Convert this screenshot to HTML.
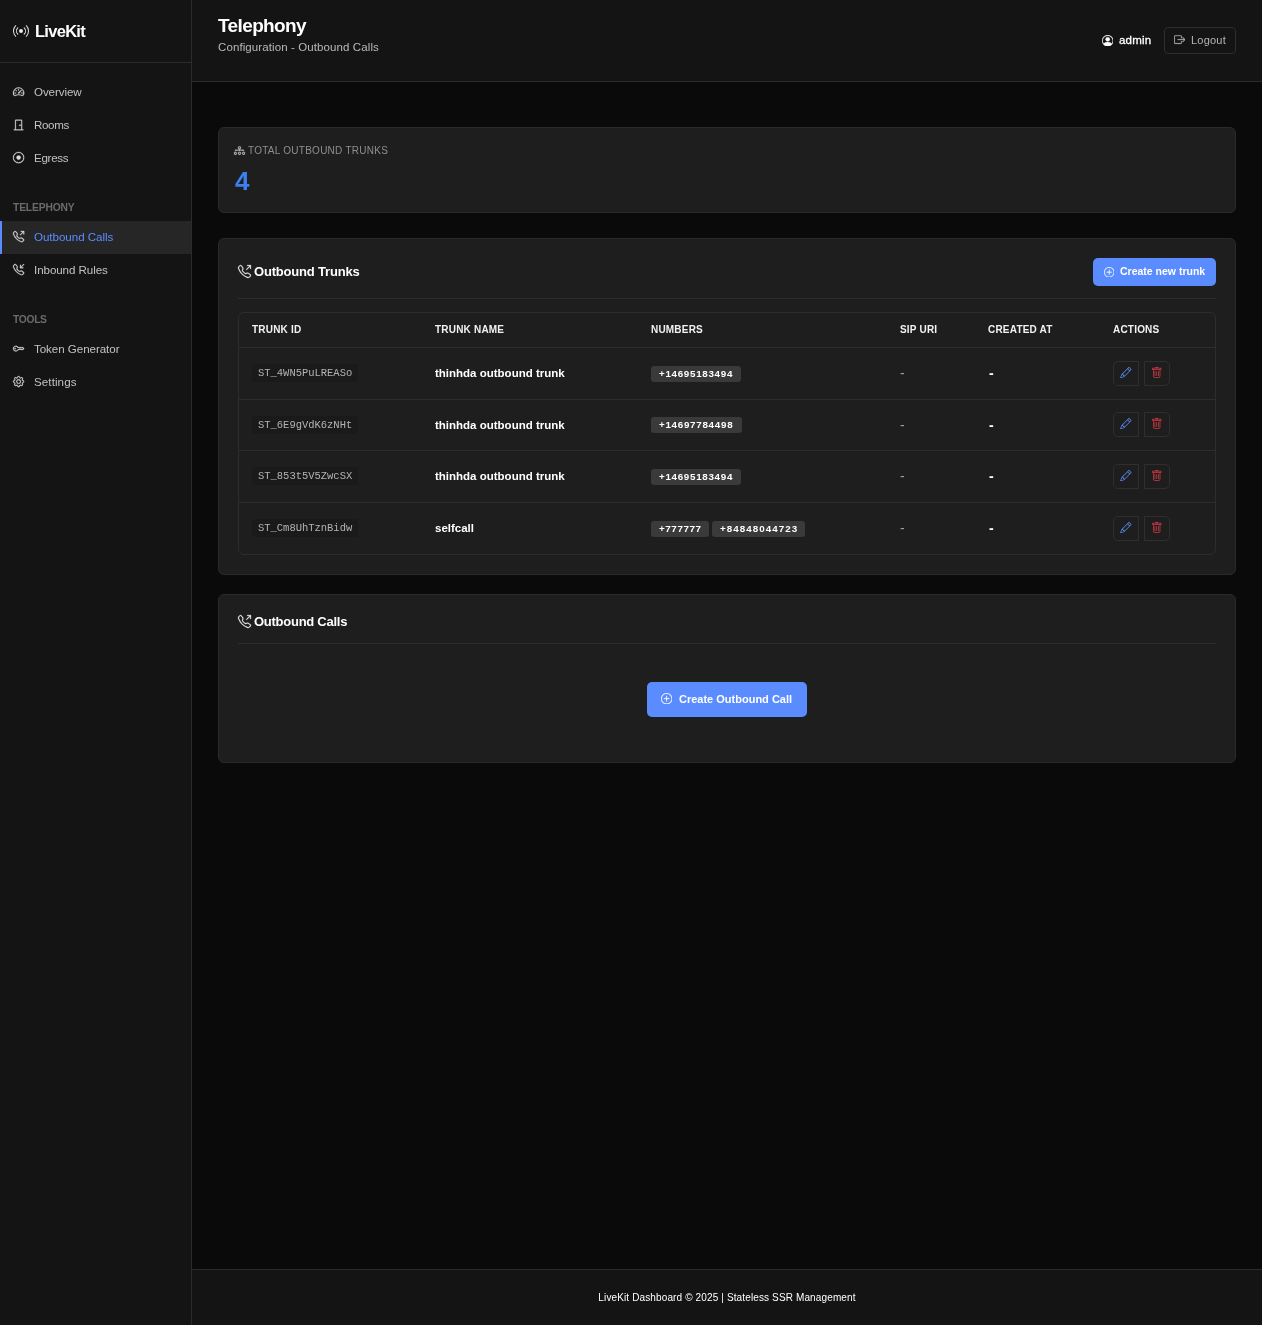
<!DOCTYPE html>
<html lang="en">
<head>
<meta charset="utf-8">
<title>LiveKit Dashboard - Telephony</title>
<style>
*{box-sizing:border-box;margin:0;padding:0}
html,body{width:1262px;height:1325px;overflow:hidden;background:#0a0a0a;color:#fff;
  font-family:"Liberation Sans",sans-serif}
svg{display:block;fill:currentColor}
span,h1,p,.uname,.sec,.stat-l,.stat-v,.ctitle,.th,.id,.nm,.num,.d1,.d2,.footer{will-change:transform}
.sidebar{position:absolute;left:0;top:0;width:192px;height:1325px;background:#141414;border-right:1px solid #2b2b2b}
.brand{height:63px;border-bottom:1px solid #2b2b2b;position:relative}
.brand svg{position:absolute;left:13px;top:23px;width:16px;height:16px;color:#e8e8e8}
.brand span{position:absolute;left:35px;top:19.5px;font-size:16.5px;font-weight:700;line-height:22px;letter-spacing:-0.72px}
.nav{position:absolute;left:0;width:191px;height:33px;color:#c2c2c2;font-size:11.6px;line-height:33px}
.nav svg{position:absolute;left:12.8px;top:10px;width:11.2px;height:11.2px;color:#dcdcdc;stroke:currentColor;stroke-width:.4;overflow:visible}
.nav span{position:absolute;left:34px;top:-1px;white-space:nowrap}
.nav.active{background:#262626;border-left:2px solid #5b8cff;color:#5b8cff}
.nav.active svg{left:10.8px}
.nav.active span{left:32px}
.sec{position:absolute;left:13px;font-size:10.3px;font-weight:700;color:#6b6b6b;line-height:12px}
.header{position:absolute;left:192px;top:0;width:1070px;height:82px;background:#141414;border-bottom:1px solid #2b2b2b}
.header h1{position:absolute;left:26px;top:13.8px;font-size:19px;line-height:24px;font-weight:700;letter-spacing:-0.62px}
.header p{position:absolute;left:26px;top:40px;font-size:11.5px;line-height:14px;color:#b9b9b9;letter-spacing:0.1px}
.user{position:absolute;left:910px;top:34.6px;width:11.4px;height:11.4px;stroke:currentColor;stroke-width:.3}
.uname{position:absolute;left:927.4px;top:32.3px;font-size:11.5px;line-height:16px;color:#fff;letter-spacing:0.2px;-webkit-text-stroke:0.3px #fff}
.logout{position:absolute;left:972px;top:27px;width:72px;height:27px;border:1px solid #2e2e2e;border-radius:4px;color:#b5b5b5;font-size:11px;line-height:25.6px}
.logout svg{position:absolute;left:9px;top:6.3px;width:11.3px;height:11.3px;stroke:currentColor;stroke-width:.35}
.logout span{position:absolute;left:26.4px;top:0;letter-spacing:0.22px}
.card{position:absolute;left:218px;width:1018px;background:#1e1e1e;border:1px solid #2a2a2a;border-radius:6px}
.stat-l{position:absolute;left:29.2px;top:17px;font-size:10px;line-height:12px;color:#8f8f8f;letter-spacing:0.26px;white-space:nowrap}
.stat-i{position:absolute;left:14.8px;top:16.6px;width:11px;height:11px;color:#c4c4c4;stroke:currentColor;stroke-width:.4;overflow:visible}
.stat-v{position:absolute;left:16px;top:37px;font-size:26px;line-height:32px;font-weight:700;color:#3b7ff0}
.ctitle{position:absolute;left:35px;font-size:13px;font-weight:700;line-height:18px;white-space:nowrap}
.cicon{position:absolute;left:19px;width:13px;height:13px;color:#ececec;stroke:currentColor;stroke-width:.3;overflow:visible}
.sep{position:absolute;left:19px;width:978px;height:1px;background:#2c2c2c}
.btn{position:absolute;background:#5b8cff;border-radius:5px;color:#fff;font-weight:700;white-space:nowrap}
.btn svg{position:absolute}
.btn span{position:absolute}
.table{position:absolute;left:19px;top:73px;width:978px;height:243px;border:1px solid #2d2d2d;border-radius:6px}
.th{position:absolute;top:0;height:34px;line-height:33px;font-size:10px;font-weight:700;letter-spacing:0.2px;color:#f2f2f2;white-space:nowrap}
.hl{position:absolute;left:0;width:976px;height:1px;background:#2d2d2d}
.row{position:absolute;left:0;width:976px;height:51px}
.id{position:absolute;left:13px;top:16px;height:18px;width:106px;padding:0 6px;background:#1a1a1a;border-radius:3px;font-family:"Liberation Mono",monospace;font-size:10.5px;line-height:18px;color:#b4b4b4;white-space:nowrap;letter-spacing:-0.02px}
.nm{position:absolute;left:196.4px;top:17.4px;font-size:11.5px;line-height:16px;font-weight:700;white-space:nowrap}
.num{position:absolute;top:18px;height:16px;background:#3a3a3a;border-radius:3px;font-size:9.8px;font-weight:700;line-height:16px;color:#fff;white-space:nowrap;text-align:left;padding-left:8px}
.d1{position:absolute;left:660.7px;top:17px;font-size:14px;line-height:16px;color:#9c9c9c}
.d2{position:absolute;left:749.5px;top:17px;font-size:14px;line-height:16px;color:#fff;font-weight:700}
.ab{position:absolute;top:13px;width:26px;height:25px;border:1px solid #2f2f2f}
.ab svg{position:absolute;left:6.2px;top:4.5px;width:11.5px;height:11.5px}
.ab.e{left:874px;border-radius:5px 0 0 5px;color:#5b8cf5}
.ab.t{left:905px;border-radius:0 5px 5px 0;color:#d93a46}
.footer{position:absolute;left:192px;top:1269px;width:1070px;height:56px;background:#141414;border-top:1px solid #2b2b2b;text-align:center;font-size:10px;line-height:55px;color:#fff;letter-spacing:0.13px}
</style>
</head>
<body>
<div class="sidebar">
  <div class="brand">
    <svg viewBox="0 0 16 16"><path d="M3.05 3.05a7 7 0 0 0 0 9.9.5.5 0 0 1-.707.707 8 8 0 0 1 0-11.314.5.5 0 0 1 .707.707m2.122 2.122a4 4 0 0 0 0 5.656.5.5 0 1 1-.708.708 5 5 0 0 1 0-7.072.5.5 0 0 1 .708.708m5.656-.708a.5.5 0 0 1 .708 0 5 5 0 0 1 0 7.072.5.5 0 1 1-.708-.708 4 4 0 0 0 0-5.656.5.5 0 0 1 0-.708m2.122-2.12a.5.5 0 0 1 .707 0 8 8 0 0 1 0 11.313.5.5 0 0 1-.707-.707 7 7 0 0 0 0-9.9.5.5 0 0 1 0-.707zM10 8a2 2 0 1 1-4 0 2 2 0 0 1 4 0"/></svg>
    <span>LiveKit</span>
  </div>
  <div class="nav" style="top:76px"><svg viewBox="0 0 16 16"><path d="M8 4a.5.5 0 0 1 .5.5V6a.5.5 0 0 1-1 0V4.500A.5.5 0 0 1 8 4M3.732 5.732a.5.5 0 0 1 .707 0l.915.914a.5.5 0 1 1-.708.708l-.914-.915a.5.5 0 0 1 0-.707M2 10a.5.5 0 0 1 .5-.5h1.586a.5.5 0 0 1 0 1H2.500A.5.5 0 0 1 2 10m9.500 0a.5.5 0 0 1 .5-.5h1.500a.5.5 0 0 1 0 1H12a.5.5 0 0 1-.5-.5m.754-4.246a.39.39 0 0 0-.527-.02L7.547 9.310a.91.91 0 1 0 1.302 1.258l3.434-4.297a.39.39 0 0 0-.029-.518z"/><path fill-rule="evenodd" d="M0 10a8 8 0 1 1 15.547 2.661c-.442 1.253-1.845 1.602-2.932 1.250C11.309 13.488 9.475 13 8 13c-1.474 0-3.310.488-4.615.911-1.087.352-2.490.003-2.932-1.250A8 8 0 0 1 0 10m8-7a7 7 0 0 0-6.603 9.329c.203.575.923.876 1.680.630C4.397 12.533 6.358 12 8 12s3.604.532 4.923.960c.757.245 1.477-.056 1.680-.631A7 7 0 0 0 8 3"/></svg><span style="letter-spacing:-0.1px">Overview</span></div>
  <div class="nav" style="top:109px"><svg viewBox="0 0 16 16"><path d="M3 2a1 1 0 0 1 1-1h8a1 1 0 0 1 1 1v13h1.500a.5.5 0 0 1 0 1h-13a.5.5 0 0 1 0-1H3zm1 13h8V2H4z"/><path d="M9 9a1 1 0 1 0 2 0 1 1 0 0 0-2 0"/></svg><span style="letter-spacing:-0.35px">Rooms</span></div>
  <div class="nav" style="top:142px"><svg viewBox="0 0 16 16"><path d="M8 15A7 7 0 1 1 8 1a7 7 0 0 1 0 14m0 1A8 8 0 1 0 8 0a8 8 0 0 0 0 16"/><path d="M11 8a3 3 0 1 1-6 0 3 3 0 0 1 6 0"/></svg><span style="letter-spacing:-0.3px">Egress</span></div>
  <div class="sec" style="top:201.5px;letter-spacing:-0.16px">TELEPHONY</div>
  <div class="nav active" style="top:221px"><svg viewBox="0 0 16 16"><path d="M3.654 1.328a.678.678 0 0 0-1.015-.063L1.605 2.300c-.483.484-.661 1.169-.450 1.770a17.600 17.600 0 0 0 4.168 6.608 17.600 17.600 0 0 0 6.608 4.168c.601.211 1.286.033 1.770-.450l1.034-1.034a.678.678 0 0 0-.063-1.015l-2.307-1.794a.68.68 0 0 0-.580-.122l-2.190.547a1.750 1.750 0 0 1-1.657-.459L5.482 8.062a1.750 1.750 0 0 1-.460-1.657l.548-2.190a.68.68 0 0 0-.122-.580zM1.884.511a1.745 1.745 0 0 1 2.612.163L6.290 2.980c.329.423.445.974.315 1.494l-.547 2.190a.68.68 0 0 0 .178.643l2.457 2.457a.68.68 0 0 0 .644.178l2.189-.547a1.750 1.750 0 0 1 1.494.315l2.306 1.794c.829.645.905 1.870.163 2.611l-1.034 1.034c-.740.740-1.846 1.065-2.877.702a18.600 18.600 0 0 1-7.010-4.420 18.600 18.600 0 0 1-4.420-7.009c-.362-1.030-.037-2.137.703-2.877zM11 .5a.5.5 0 0 1 .5-.5h4a.5.5 0 0 1 .5.5v4a.5.5 0 0 1-1 0V1.707l-4.146 4.147a.5.5 0 0 1-.708-.708L14.293 1H11.500a.5.5 0 0 1-.5-.5"/></svg><span style="letter-spacing:-0.05px">Outbound Calls</span></div>
  <div class="nav" style="top:254px"><svg viewBox="0 0 16 16"><path d="M15.854.146a.5.5 0 0 1 0 .708L11.707 5H14.500a.5.5 0 0 1 0 1h-4a.5.5 0 0 1-.5-.5v-4a.5.5 0 0 1 1 0v2.793L15.146.146a.5.5 0 0 1 .708 0m-12.200 1.182a.678.678 0 0 0-1.015-.063L1.605 2.300c-.483.484-.661 1.169-.450 1.770a17.600 17.600 0 0 0 4.168 6.608 17.600 17.600 0 0 0 6.608 4.168c.601.211 1.286.033 1.770-.450l1.034-1.034a.678.678 0 0 0-.063-1.015l-2.307-1.794a.68.68 0 0 0-.580-.122l-2.190.547a1.750 1.750 0 0 1-1.657-.459L5.482 8.062a1.750 1.750 0 0 1-.460-1.657l.548-2.190a.68.68 0 0 0-.122-.580zM1.884.511a1.745 1.745 0 0 1 2.612.163L6.290 2.980c.329.423.445.974.315 1.494l-.547 2.190a.68.68 0 0 0 .178.643l2.457 2.457a.68.68 0 0 0 .644.178l2.189-.547a1.750 1.750 0 0 1 1.494.315l2.306 1.794c.829.645.905 1.870.163 2.611l-1.034 1.034c-.740.740-1.846 1.065-2.877.702a18.600 18.600 0 0 1-7.010-4.420 18.600 18.600 0 0 1-4.420-7.009c-.362-1.030-.037-2.137.703-2.877z"/></svg><span style="letter-spacing:-0.08px">Inbound Rules</span></div>
  <div class="sec" style="top:313.5px;letter-spacing:-0.33px">TOOLS</div>
  <div class="nav" style="top:333px"><svg viewBox="0 0 16 16"><path d="M0 8a4 4 0 0 1 7.465-2H14a.5.5 0 0 1 .354.146l1.500 1.500a.5.5 0 0 1 0 .708l-1.500 1.500a.5.5 0 0 1-.708 0L13 9.207l-.646.647a.5.5 0 0 1-.708 0L11 9.207l-.646.647a.5.5 0 0 1-.708 0L9 9.207l-.646.647A.5.5 0 0 1 8 10h-.535A4 4 0 0 1 0 8m4-3a3 3 0 1 0 2.712 4.285A.5.5 0 0 1 7.163 9h.630l.853-.854a.5.5 0 0 1 .708 0l.646.647.646-.647a.5.5 0 0 1 .708 0l.646.647.646-.647a.5.5 0 0 1 .708 0l.646.647.793-.793-1-1h-6.630a.5.5 0 0 1-.451-.285A3 3 0 0 0 4 5"/><path d="M4 8a1 1 0 1 1-2 0 1 1 0 0 1 2 0"/></svg><span style="letter-spacing:-0.06px">Token Generator</span></div>
  <div class="nav" style="top:366px"><svg viewBox="0 0 16 16"><path d="M8 4.754a3.246 3.246 0 1 0 0 6.492 3.246 3.246 0 0 0 0-6.492M5.754 8a2.246 2.246 0 1 1 4.492 0 2.246 2.246 0 0 1-4.492 0"/><path d="M9.796 1.343c-.527-1.790-3.065-1.790-3.592 0l-.094.319a.873.873 0 0 1-1.255.520l-.292-.160c-1.640-.892-3.433.902-2.540 2.541l.159.292a.873.873 0 0 1-.520 1.255l-.319.094c-1.790.527-1.790 3.065 0 3.592l.319.094a.873.873 0 0 1 .520 1.255l-.160.292c-.892 1.640.901 3.434 2.541 2.540l.292-.159a.873.873 0 0 1 1.255.520l.094.319c.527 1.790 3.065 1.790 3.592 0l.094-.319a.873.873 0 0 1 1.255-.520l.292.160c1.640.893 3.434-.902 2.540-2.541l-.159-.292a.873.873 0 0 1 .520-1.255l.319-.094c1.790-.527 1.790-3.065 0-3.592l-.319-.094a.873.873 0 0 1-.520-1.255l.160-.292c.893-1.640-.902-3.433-2.541-2.540l-.292.159a.873.873 0 0 1-1.255-.520zm-2.633.283c.246-.835 1.428-.835 1.674 0l.094.319a1.873 1.873 0 0 0 2.693 1.115l.291-.160c.764-.415 1.600.420 1.184 1.185l-.159.292a1.873 1.873 0 0 0 1.116 2.692l.318.094c.835.246.835 1.428 0 1.674l-.319.094a1.873 1.873 0 0 0-1.115 2.693l.160.291c.415.764-.420 1.600-1.185 1.184l-.291-.159a1.873 1.873 0 0 0-2.693 1.116l-.094.318c-.246.835-1.428.835-1.674 0l-.094-.319a1.873 1.873 0 0 0-2.692-1.115l-.292.160c-.764.415-1.600-.420-1.184-1.185l.159-.291A1.873 1.873 0 0 0 1.945 8.930l-.319-.094c-.835-.246-.835-1.428 0-1.674l.319-.094A1.873 1.873 0 0 0 3.060 4.377l-.160-.292c-.415-.764.420-1.600 1.185-1.184l.292.159a1.873 1.873 0 0 0 2.692-1.115z"/></svg><span style="letter-spacing:0.08px">Settings</span></div>
</div>

<div class="header">
  <h1>Telephony</h1>
  <p>Configuration - Outbound Calls</p>
  <svg class="user" viewBox="0 0 16 16"><path d="M11 6a3 3 0 1 1-6 0 3 3 0 0 1 6 0"/><path fill-rule="evenodd" d="M0 8a8 8 0 1 1 16 0A8 8 0 0 1 0 8m8-7a7 7 0 0 0-5.468 11.370C3.242 11.226 4.805 10 8 10s4.757 1.225 5.468 2.370A7 7 0 0 0 8 1"/></svg>
  <div class="uname">admin</div>
  <div class="logout"><svg viewBox="0 0 16 16"><path fill-rule="evenodd" d="M10 12.500a.5.5 0 0 1-.5.5h-8a.5.5 0 0 1-.5-.5v-9a.5.5 0 0 1 .5-.5h8a.5.5 0 0 1 .5.5v2a.5.5 0 0 0 1 0v-2A1.500 1.500 0 0 0 9.500 2h-8A1.500 1.500 0 0 0 0 3.500v9A1.500 1.500 0 0 0 1.500 14h8a1.500 1.500 0 0 0 1.500-1.500v-2a.5.5 0 0 0-1 0z"/><path fill-rule="evenodd" d="M15.854 8.354a.5.5 0 0 0 0-.708l-3-3a.5.5 0 0 0-.708.708L14.293 7.500H5.500a.5.5 0 0 0 0 1h8.793l-2.147 2.146a.5.5 0 0 0 .708.708z"/></svg><span>Logout</span></div>
</div>

<!-- Stat card -->
<div class="card" style="top:127px;height:86px">
  <svg class="stat-i" viewBox="0 0 16 16"><path fill-rule="evenodd" d="M6 3.500A1.500 1.500 0 0 1 7.500 2h1A1.500 1.500 0 0 1 10 3.500v1A1.500 1.500 0 0 1 8.500 6v1H14a.5.5 0 0 1 .5.5v1a.5.5 0 0 1-1 0V8h-5v.5a.5.5 0 0 1-1 0V8h-5v.5a.5.5 0 0 1-1 0v-1A.5.5 0 0 1 2 7h5.500V6A1.500 1.500 0 0 1 6 4.500zM8.500 5a.5.5 0 0 0 .5-.5v-1a.5.5 0 0 0-.5-.5h-1a.5.5 0 0 0-.5.5v1a.5.5 0 0 0 .5.5zM0 11.500A1.500 1.500 0 0 1 1.500 10h1A1.500 1.500 0 0 1 4 11.500v1A1.500 1.500 0 0 1 2.500 14h-1A1.500 1.500 0 0 1 0 12.500zm1.500-.5a.5.5 0 0 0-.5.5v1a.5.5 0 0 0 .5.5h1a.5.5 0 0 0 .5-.5v-1a.5.5 0 0 0-.5-.5zm4.500.5A1.500 1.500 0 0 1 7.500 10h1a1.500 1.500 0 0 1 1.500 1.500v1A1.500 1.500 0 0 1 8.500 14h-1A1.500 1.500 0 0 1 6 12.500zm1.500-.5a.5.5 0 0 0-.5.5v1a.5.5 0 0 0 .5.5h1a.5.5 0 0 0 .5-.5v-1a.5.5 0 0 0-.5-.5zm4.500.5a1.500 1.500 0 0 1 1.500-1.500h1a1.500 1.500 0 0 1 1.500 1.500v1a1.500 1.500 0 0 1-1.500 1.500h-1a1.500 1.500 0 0 1-1.500-1.500zm1.500-.5a.5.5 0 0 0-.5.5v1a.5.5 0 0 0 .5.5h1a.5.5 0 0 0 .5-.5v-1a.5.5 0 0 0-.5-.5z"/></svg>
  <div class="stat-l">TOTAL OUTBOUND TRUNKS</div>
  <div class="stat-v">4</div>
</div>

<!-- Trunks card -->
<div class="card" style="top:238px;height:337px">
  <svg class="cicon" style="top:26px" viewBox="0 0 16 16"><path d="M3.654 1.328a.678.678 0 0 0-1.015-.063L1.605 2.300c-.483.484-.661 1.169-.450 1.770a17.600 17.600 0 0 0 4.168 6.608 17.600 17.600 0 0 0 6.608 4.168c.601.211 1.286.033 1.770-.450l1.034-1.034a.678.678 0 0 0-.063-1.015l-2.307-1.794a.68.68 0 0 0-.580-.122l-2.190.547a1.750 1.750 0 0 1-1.657-.459L5.482 8.062a1.750 1.750 0 0 1-.460-1.657l.548-2.190a.68.68 0 0 0-.122-.580zM1.884.511a1.745 1.745 0 0 1 2.612.163L6.290 2.980c.329.423.445.974.315 1.494l-.547 2.190a.68.68 0 0 0 .178.643l2.457 2.457a.68.68 0 0 0 .644.178l2.189-.547a1.750 1.750 0 0 1 1.494.315l2.306 1.794c.829.645.905 1.870.163 2.611l-1.034 1.034c-.740.740-1.846 1.065-2.877.702a18.600 18.600 0 0 1-7.010-4.420 18.600 18.600 0 0 1-4.420-7.009c-.362-1.030-.037-2.137.703-2.877zM11 .5a.5.5 0 0 1 .5-.5h4a.5.5 0 0 1 .5.5v4a.5.5 0 0 1-1 0V1.707l-4.146 4.147a.5.5 0 0 1-.708-.708L14.293 1H11.500a.5.5 0 0 1-.5-.5"/></svg>
  <div class="ctitle" style="top:24px;letter-spacing:-0.19px">Outbound Trunks</div>
  <div class="btn" style="left:874px;top:19px;width:123px;height:28px;font-size:10.5px;line-height:26px;border-radius:5px"><svg style="left:11px;top:8.8px;width:10.4px;height:10.4px;stroke:currentColor;stroke-width:.3" viewBox="0 0 16 16"><path d="M8 15A7 7 0 1 1 8 1a7 7 0 0 1 0 14m0 1A8 8 0 1 0 8 0a8 8 0 0 0 0 16"/><path d="M8 4a.5.5 0 0 1 .5.5v3h3a.5.5 0 0 1 0 1h-3v3a.5.5 0 0 1-1 0v-3h-3a.5.5 0 0 1 0-1h3v-3A.5.5 0 0 1 8 4"/></svg><span style="left:27px;top:0">Create new trunk</span></div>
  <div class="sep" style="top:59px"></div>
  <div class="table">
    <div class="th" style="left:13px">TRUNK ID</div>
    <div class="th" style="left:196px">TRUNK NAME</div>
    <div class="th" style="left:412px">NUMBERS</div>
    <div class="th" style="left:661px">SIP URI</div>
    <div class="th" style="left:749px">CREATED AT</div>
    <div class="th" style="left:874px">ACTIONS</div>
    <div class="hl" style="top:34px"></div>
    <div class="row" style="top:35px">
      <div class="id">ST_4WN5PuLREASo</div><div class="nm">thinhda outbound trunk</div>
      <div class="num" style="left:412px;width:90px;letter-spacing:0.7px">+14695183494</div>
      <div class="d1">-</div><div class="d2">-</div>
      <div class="ab e"><svg viewBox="0 0 16 16"><path d="M12.146.146a.5.5 0 0 1 .708 0l3 3a.5.5 0 0 1 0 .708l-10 10a.5.5 0 0 1-.168.110l-5 2a.5.5 0 0 1-.650-.650l2-5a.5.5 0 0 1 .110-.168zM11.207 2.500 13.500 4.793 14.793 3.500 12.500 1.207zm1.586 3L10.500 3.207 4 9.707V10h.5a.5.5 0 0 1 .5.5v.5h.5a.5.5 0 0 1 .5.5v.5h.293zm-9.761 5.175-.106.106-1.528 3.821 3.821-1.528.106-.106A.5.5 0 0 1 5 12.500V12h-.5a.5.5 0 0 1-.5-.5V11h-.5a.5.5 0 0 1-.468-.325"/></svg></div><div class="ab t"><svg viewBox="0 0 16 16"><path d="M5.500 5.500A.5.5 0 0 1 6 6v6a.5.5 0 0 1-1 0V6a.5.5 0 0 1 .5-.5m2.500 0a.5.5 0 0 1 .5.5v6a.5.5 0 0 1-1 0V6a.5.5 0 0 1 .5-.5m3 .5a.5.5 0 0 0-1 0v6a.5.5 0 0 0 1 0z"/><path d="M14.500 3a1 1 0 0 1-1 1H13v9a2 2 0 0 1-2 2H5a2 2 0 0 1-2-2V4h-.5a1 1 0 0 1-1-1V2a1 1 0 0 1 1-1H6a1 1 0 0 1 1-1h2a1 1 0 0 1 1 1h3.500a1 1 0 0 1 1 1zM4.118 4 4 4.059V13a1 1 0 0 0 1 1h6a1 1 0 0 0 1-1V4.059L11.882 4zM2.500 3h11V2h-11z"/></svg></div>
    </div>
    <div class="hl" style="top:86px"></div>
    <div class="row" style="top:87px;height:50px">
      <div class="id">ST_6E9gVdK6zNHt</div><div class="nm">thinhda outbound trunk</div>
      <div class="num" style="left:412px;width:91px;top:17px;letter-spacing:0.72px">+14697784498</div>
      <div class="d1">-</div><div class="d2">-</div>
      <div class="ab e" style="top:12px"><svg viewBox="0 0 16 16"><path d="M12.146.146a.5.5 0 0 1 .708 0l3 3a.5.5 0 0 1 0 .708l-10 10a.5.5 0 0 1-.168.110l-5 2a.5.5 0 0 1-.650-.650l2-5a.5.5 0 0 1 .110-.168zM11.207 2.500 13.500 4.793 14.793 3.500 12.500 1.207zm1.586 3L10.500 3.207 4 9.707V10h.5a.5.5 0 0 1 .5.5v.5h.5a.5.5 0 0 1 .5.5v.5h.293zm-9.761 5.175-.106.106-1.528 3.821 3.821-1.528.106-.106A.5.5 0 0 1 5 12.500V12h-.5a.5.5 0 0 1-.5-.5V11h-.5a.5.5 0 0 1-.468-.325"/></svg></div><div class="ab t" style="top:12px"><svg viewBox="0 0 16 16"><path d="M5.500 5.500A.5.5 0 0 1 6 6v6a.5.5 0 0 1-1 0V6a.5.5 0 0 1 .5-.5m2.500 0a.5.5 0 0 1 .5.5v6a.5.5 0 0 1-1 0V6a.5.5 0 0 1 .5-.5m3 .5a.5.5 0 0 0-1 0v6a.5.5 0 0 0 1 0z"/><path d="M14.500 3a1 1 0 0 1-1 1H13v9a2 2 0 0 1-2 2H5a2 2 0 0 1-2-2V4h-.5a1 1 0 0 1-1-1V2a1 1 0 0 1 1-1H6a1 1 0 0 1 1-1h2a1 1 0 0 1 1 1h3.500a1 1 0 0 1 1 1zM4.118 4 4 4.059V13a1 1 0 0 0 1 1h6a1 1 0 0 0 1-1V4.059L11.882 4zM2.500 3h11V2h-11z"/></svg></div>
    </div>
    <div class="hl" style="top:137px"></div>
    <div class="row" style="top:138px">
      <div class="id">ST_853t5V5ZwcSX</div><div class="nm">thinhda outbound trunk</div>
      <div class="num" style="left:412px;width:90px;letter-spacing:0.7px">+14695183494</div>
      <div class="d1">-</div><div class="d2">-</div>
      <div class="ab e"><svg viewBox="0 0 16 16"><path d="M12.146.146a.5.5 0 0 1 .708 0l3 3a.5.5 0 0 1 0 .708l-10 10a.5.5 0 0 1-.168.110l-5 2a.5.5 0 0 1-.650-.650l2-5a.5.5 0 0 1 .110-.168zM11.207 2.500 13.500 4.793 14.793 3.500 12.500 1.207zm1.586 3L10.500 3.207 4 9.707V10h.5a.5.5 0 0 1 .5.5v.5h.5a.5.5 0 0 1 .5.5v.5h.293zm-9.761 5.175-.106.106-1.528 3.821 3.821-1.528.106-.106A.5.5 0 0 1 5 12.500V12h-.5a.5.5 0 0 1-.5-.5V11h-.5a.5.5 0 0 1-.468-.325"/></svg></div><div class="ab t"><svg viewBox="0 0 16 16"><path d="M5.500 5.500A.5.5 0 0 1 6 6v6a.5.5 0 0 1-1 0V6a.5.5 0 0 1 .5-.5m2.500 0a.5.5 0 0 1 .5.5v6a.5.5 0 0 1-1 0V6a.5.5 0 0 1 .5-.5m3 .5a.5.5 0 0 0-1 0v6a.5.5 0 0 0 1 0z"/><path d="M14.500 3a1 1 0 0 1-1 1H13v9a2 2 0 0 1-2 2H5a2 2 0 0 1-2-2V4h-.5a1 1 0 0 1-1-1V2a1 1 0 0 1 1-1H6a1 1 0 0 1 1-1h2a1 1 0 0 1 1 1h3.500a1 1 0 0 1 1 1zM4.118 4 4 4.059V13a1 1 0 0 0 1 1h6a1 1 0 0 0 1-1V4.059L11.882 4zM2.500 3h11V2h-11z"/></svg></div>
    </div>
    <div class="hl" style="top:189px"></div>
    <div class="row" style="top:190px">
      <div class="id">ST_Cm8UhTznBidw</div><div class="nm">selfcall</div>
      <div class="num" style="left:412px;width:58px;letter-spacing:0.6px">+777777</div><div class="num" style="left:473.4px;width:92.8px;letter-spacing:1.05px">+84848044723</div>
      <div class="d1">-</div><div class="d2">-</div>
      <div class="ab e"><svg viewBox="0 0 16 16"><path d="M12.146.146a.5.5 0 0 1 .708 0l3 3a.5.5 0 0 1 0 .708l-10 10a.5.5 0 0 1-.168.110l-5 2a.5.5 0 0 1-.650-.650l2-5a.5.5 0 0 1 .110-.168zM11.207 2.500 13.500 4.793 14.793 3.500 12.500 1.207zm1.586 3L10.500 3.207 4 9.707V10h.5a.5.5 0 0 1 .5.5v.5h.5a.5.5 0 0 1 .5.5v.5h.293zm-9.761 5.175-.106.106-1.528 3.821 3.821-1.528.106-.106A.5.5 0 0 1 5 12.500V12h-.5a.5.5 0 0 1-.5-.5V11h-.5a.5.5 0 0 1-.468-.325"/></svg></div><div class="ab t"><svg viewBox="0 0 16 16"><path d="M5.500 5.500A.5.5 0 0 1 6 6v6a.5.5 0 0 1-1 0V6a.5.5 0 0 1 .5-.5m2.500 0a.5.5 0 0 1 .5.5v6a.5.5 0 0 1-1 0V6a.5.5 0 0 1 .5-.5m3 .5a.5.5 0 0 0-1 0v6a.5.5 0 0 0 1 0z"/><path d="M14.500 3a1 1 0 0 1-1 1H13v9a2 2 0 0 1-2 2H5a2 2 0 0 1-2-2V4h-.5a1 1 0 0 1-1-1V2a1 1 0 0 1 1-1H6a1 1 0 0 1 1-1h2a1 1 0 0 1 1 1h3.500a1 1 0 0 1 1 1zM4.118 4 4 4.059V13a1 1 0 0 0 1 1h6a1 1 0 0 0 1-1V4.059L11.882 4zM2.500 3h11V2h-11z"/></svg></div>
    </div>
  </div>
</div>

<!-- Calls card -->
<div class="card" style="top:594px;height:169px">
  <svg class="cicon" style="top:20.2px" viewBox="0 0 16 16"><path d="M3.654 1.328a.678.678 0 0 0-1.015-.063L1.605 2.300c-.483.484-.661 1.169-.450 1.770a17.600 17.600 0 0 0 4.168 6.608 17.600 17.600 0 0 0 6.608 4.168c.601.211 1.286.033 1.770-.450l1.034-1.034a.678.678 0 0 0-.063-1.015l-2.307-1.794a.68.68 0 0 0-.580-.122l-2.190.547a1.750 1.750 0 0 1-1.657-.459L5.482 8.062a1.750 1.750 0 0 1-.460-1.657l.548-2.190a.68.68 0 0 0-.122-.580zM1.884.511a1.745 1.745 0 0 1 2.612.163L6.290 2.980c.329.423.445.974.315 1.494l-.547 2.190a.68.68 0 0 0 .178.643l2.457 2.457a.68.68 0 0 0 .644.178l2.189-.547a1.750 1.750 0 0 1 1.494.315l2.306 1.794c.829.645.905 1.870.163 2.611l-1.034 1.034c-.740.740-1.846 1.065-2.877.702a18.600 18.600 0 0 1-7.010-4.420 18.600 18.600 0 0 1-4.420-7.009c-.362-1.030-.037-2.137.703-2.877zM11 .5a.5.5 0 0 1 .5-.5h4a.5.5 0 0 1 .5.5v4a.5.5 0 0 1-1 0V1.707l-4.146 4.147a.5.5 0 0 1-.708-.708L14.293 1H11.500a.5.5 0 0 1-.5-.5"/></svg>
  <div class="ctitle" style="top:18px;letter-spacing:-0.26px">Outbound Calls</div>
  <div class="sep" style="top:48px"></div>
  <div class="btn" style="left:428px;top:87px;width:160px;height:35px;font-size:11px;line-height:34px;border-radius:5px"><svg style="left:14px;top:10.7px;width:11.3px;height:11.3px;stroke:currentColor;stroke-width:.3" viewBox="0 0 16 16"><path d="M8 15A7 7 0 1 1 8 1a7 7 0 0 1 0 14m0 1A8 8 0 1 0 8 0a8 8 0 0 0 0 16"/><path d="M8 4a.5.5 0 0 1 .5.5v3h3a.5.5 0 0 1 0 1h-3v3a.5.5 0 0 1-1 0v-3h-3a.5.5 0 0 1 0-1h3v-3A.5.5 0 0 1 8 4"/></svg><span style="left:32px;top:0">Create Outbound Call</span></div>
</div>

<div class="footer">LiveKit Dashboard © 2025 | Stateless SSR Management</div>

</body>
</html>
